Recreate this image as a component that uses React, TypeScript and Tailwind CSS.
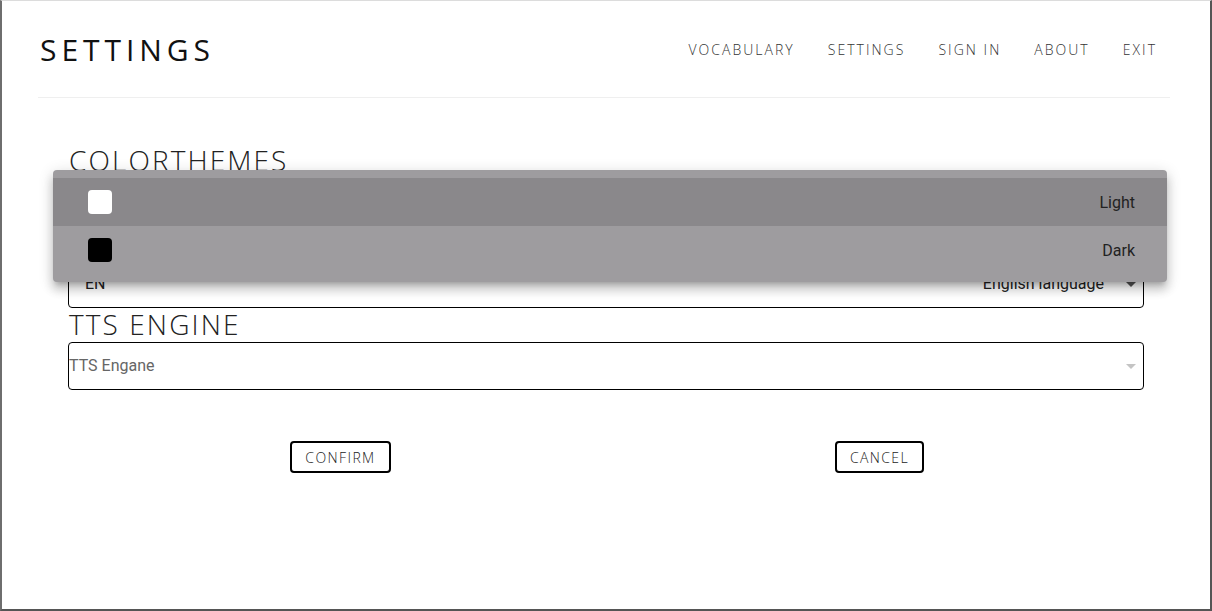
import React from "react"

const navItems = ["VOCABULARY", "SETTINGS", "SIGN IN", "ABOUT", "EXIT"]

function Arrow({ light }: { light?: boolean }) {
	return (
		<svg
			className="w-6 h-6"
			viewBox="0 0 24 24"
			fill={light ? "#c4c4c4" : "#555555"}
		>
			<path d="M7 10l5 5 5-5z" />
		</svg>
	)
}

function Heading({ children }: { children: React.ReactNode }) {
	return (
		<h2 className="h-[34px] pl-px text-[28px] leading-[33px] font-light tracking-[0.075em] text-[#222]">
			{children}
		</h2>
	)
}

export default function App() {
	return (
		<div className="h-[611px] overflow-hidden bg-white border-t border-t-[#dcdcdc] border-l-2 border-l-[#6e6e6e] border-r-2 border-r-[#555] border-b-2 border-b-[#555] font-['Open_Sans',sans-serif]">
			<div className="relative ml-[36px] mr-[40px]">
				{/* Header */}
				<header className="h-[97px] flex items-center justify-between border-b border-[#efefef]">
					<h1 className="pl-[2px] text-[30px] font-normal tracking-[0.165em] text-[#111]">
						SETTINGS
					</h1>
					<nav className="flex items-center gap-[33px] pr-[13px]">
						{navItems.map((item) => (
							<a
								key={item}
								href="#"
								className="text-[14px] font-light tracking-[0.145em] text-[#333]"
							>
								{item}
							</a>
						))}
					</nav>
				</header>

				{/* Form */}
				<div className="ml-[30px] mr-[26px] pt-[46px]">
					<Heading>COLORTHEMES</Heading>
					<div className="h-[48px] rounded border border-black flex items-center justify-between pl-4 font-['Roboto',sans-serif] text-base text-[#222]">
						<span>Light</span>
						<Arrow />
					</div>
					<Heading>LANGUAGE</Heading>
					<div className="h-[48px] rounded border border-black flex items-center justify-between pl-4 font-['Roboto',sans-serif] text-base text-[#222]">
						<span>EN</span>
						<div className="flex items-center gap-[15px]">
							<span>English language</span>
							<Arrow />
						</div>
					</div>
					<Heading>TTS ENGINE</Heading>
					<div className="h-[48px] rounded border border-black flex items-center justify-between font-['Roboto',sans-serif] text-base text-[#666]">
						<span>TTS Engane</span>
						<Arrow light />
					</div>

					<div className="flex items-center gap-[444px] pl-[222px] mt-[51px]">
						<button className="h-8 w-[101px] rounded border-2 border-black text-[14px] font-light tracking-[0.1em] text-[#222]">
							CONFIRM
						</button>
						<button className="h-8 w-[89px] rounded border-2 border-black text-[14px] font-light tracking-[0.1em] text-[#222]">
							CANCEL
						</button>
					</div>
				</div>

				{/* Open colortheme menu */}
				<div className="absolute left-[15px] top-[169px] w-[1114px] rounded py-2 bg-[#9e9c9f] shadow-[0_5px_5px_-3px_rgba(0,0,0,0.2),0_8px_10px_1px_rgba(0,0,0,0.14),0_3px_14px_2px_rgba(0,0,0,0.12)] font-['Roboto',sans-serif] text-base text-[#222]">
					<div className="h-12 flex items-center justify-between pl-[35px] pr-[32px] bg-[#8a888b]">
						<span className="w-6 h-6 rounded bg-white" />
						<span className="pt-px">Light</span>
					</div>
					<div className="h-12 flex items-center justify-between pl-[35px] pr-[32px]">
						<span className="w-6 h-6 rounded bg-black" />
						<span className="pt-px">Dark</span>
					</div>
				</div>
			</div>
		</div>
	)
}
